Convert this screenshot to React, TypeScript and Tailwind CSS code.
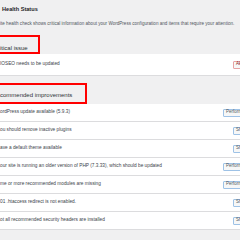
const rows = [
  { text: "ordPress update available (5.9.3)", action: "Perform update", wide: true },
  { text: "ou should remove inactive plugins", action: "Show details", wide: false },
  { text: "ave a default theme available", action: "Show details", wide: false },
  { text: "our site is running an older version of PHP (7.3.33), which should be updated", action: "Perform update", wide: true },
  { text: "me or more recommended modules are missing", action: "Perform update", wide: true },
  { text: "01 .htaccess redirect is not enabled.", action: "Show details", wide: false },
  { text: "ot all recommended security headers are installed", action: "Show details", wide: false },
];

const App = () => {
  return (
    <div className="w-[240px] h-[240px] overflow-hidden bg-[#f0f0f1] font-['Liberation_Sans',Arial,sans-serif]">
      {/* Page header */}
      <div className="h-[20px] flex items-center pl-[2px] text-[5.6px] font-semibold text-[#1d2327] leading-none">
        Health Status
      </div>
      <div className="h-[8px] flex items-center text-[4.58px] text-[#50575e] whitespace-nowrap leading-none">
        ite health check shows critical information about your WordPress configuration and items that require your attention.
      </div>

      {/* Critical */}
      <div className="mt-[7px] w-[40px] h-[19px] border-2 border-l-0 border-[#ff0000] flex items-end pb-[1px] text-[6px] text-[#2c3338] leading-none">
        itical issue
      </div>
      <div className="h-[22px] bg-white border-b border-[#dcdcde] grid grid-cols-[233px_auto] items-center">
        <span className="text-[4.75px] text-[#3c434a] whitespace-nowrap leading-none">IOSEO needs to be updated</span>
        <span className="h-[8px] px-[2px] flex items-center border border-[#e6a3a4] bg-[#f6f7f7] rounded-[1px] text-[4.5px] text-[#8a2424] whitespace-nowrap leading-none">
          Aktualisieren
        </span>
      </div>

      {/* Recommended */}
      <div className="mt-[7px] w-[87px] h-[21px] border-2 border-l-0 border-[#ff0000] flex items-end pb-[4px] text-[6px] text-[#2c3338] leading-none">
        commended improvements
      </div>
      <div className="bg-white">
        {rows.map((r) => (
          <div
            key={r.text}
            className={`h-[18px] border-b border-[#dcdcde] grid items-center ${r.wide ? "grid-cols-[223px_auto]" : "grid-cols-[233px_auto]"}`}
          >
            <span className="text-[4.75px] text-[#3c434a] whitespace-nowrap leading-none">{r.text}</span>
            <span className="h-[8px] px-[2px] flex items-center border border-[#9ec2e6] bg-[#f6f7f7] rounded-[1px] text-[4.5px] text-[#50575e] whitespace-nowrap leading-none">
              {r.action}
            </span>
          </div>
        ))}
      </div>
    </div>
  );
};

export default App;
